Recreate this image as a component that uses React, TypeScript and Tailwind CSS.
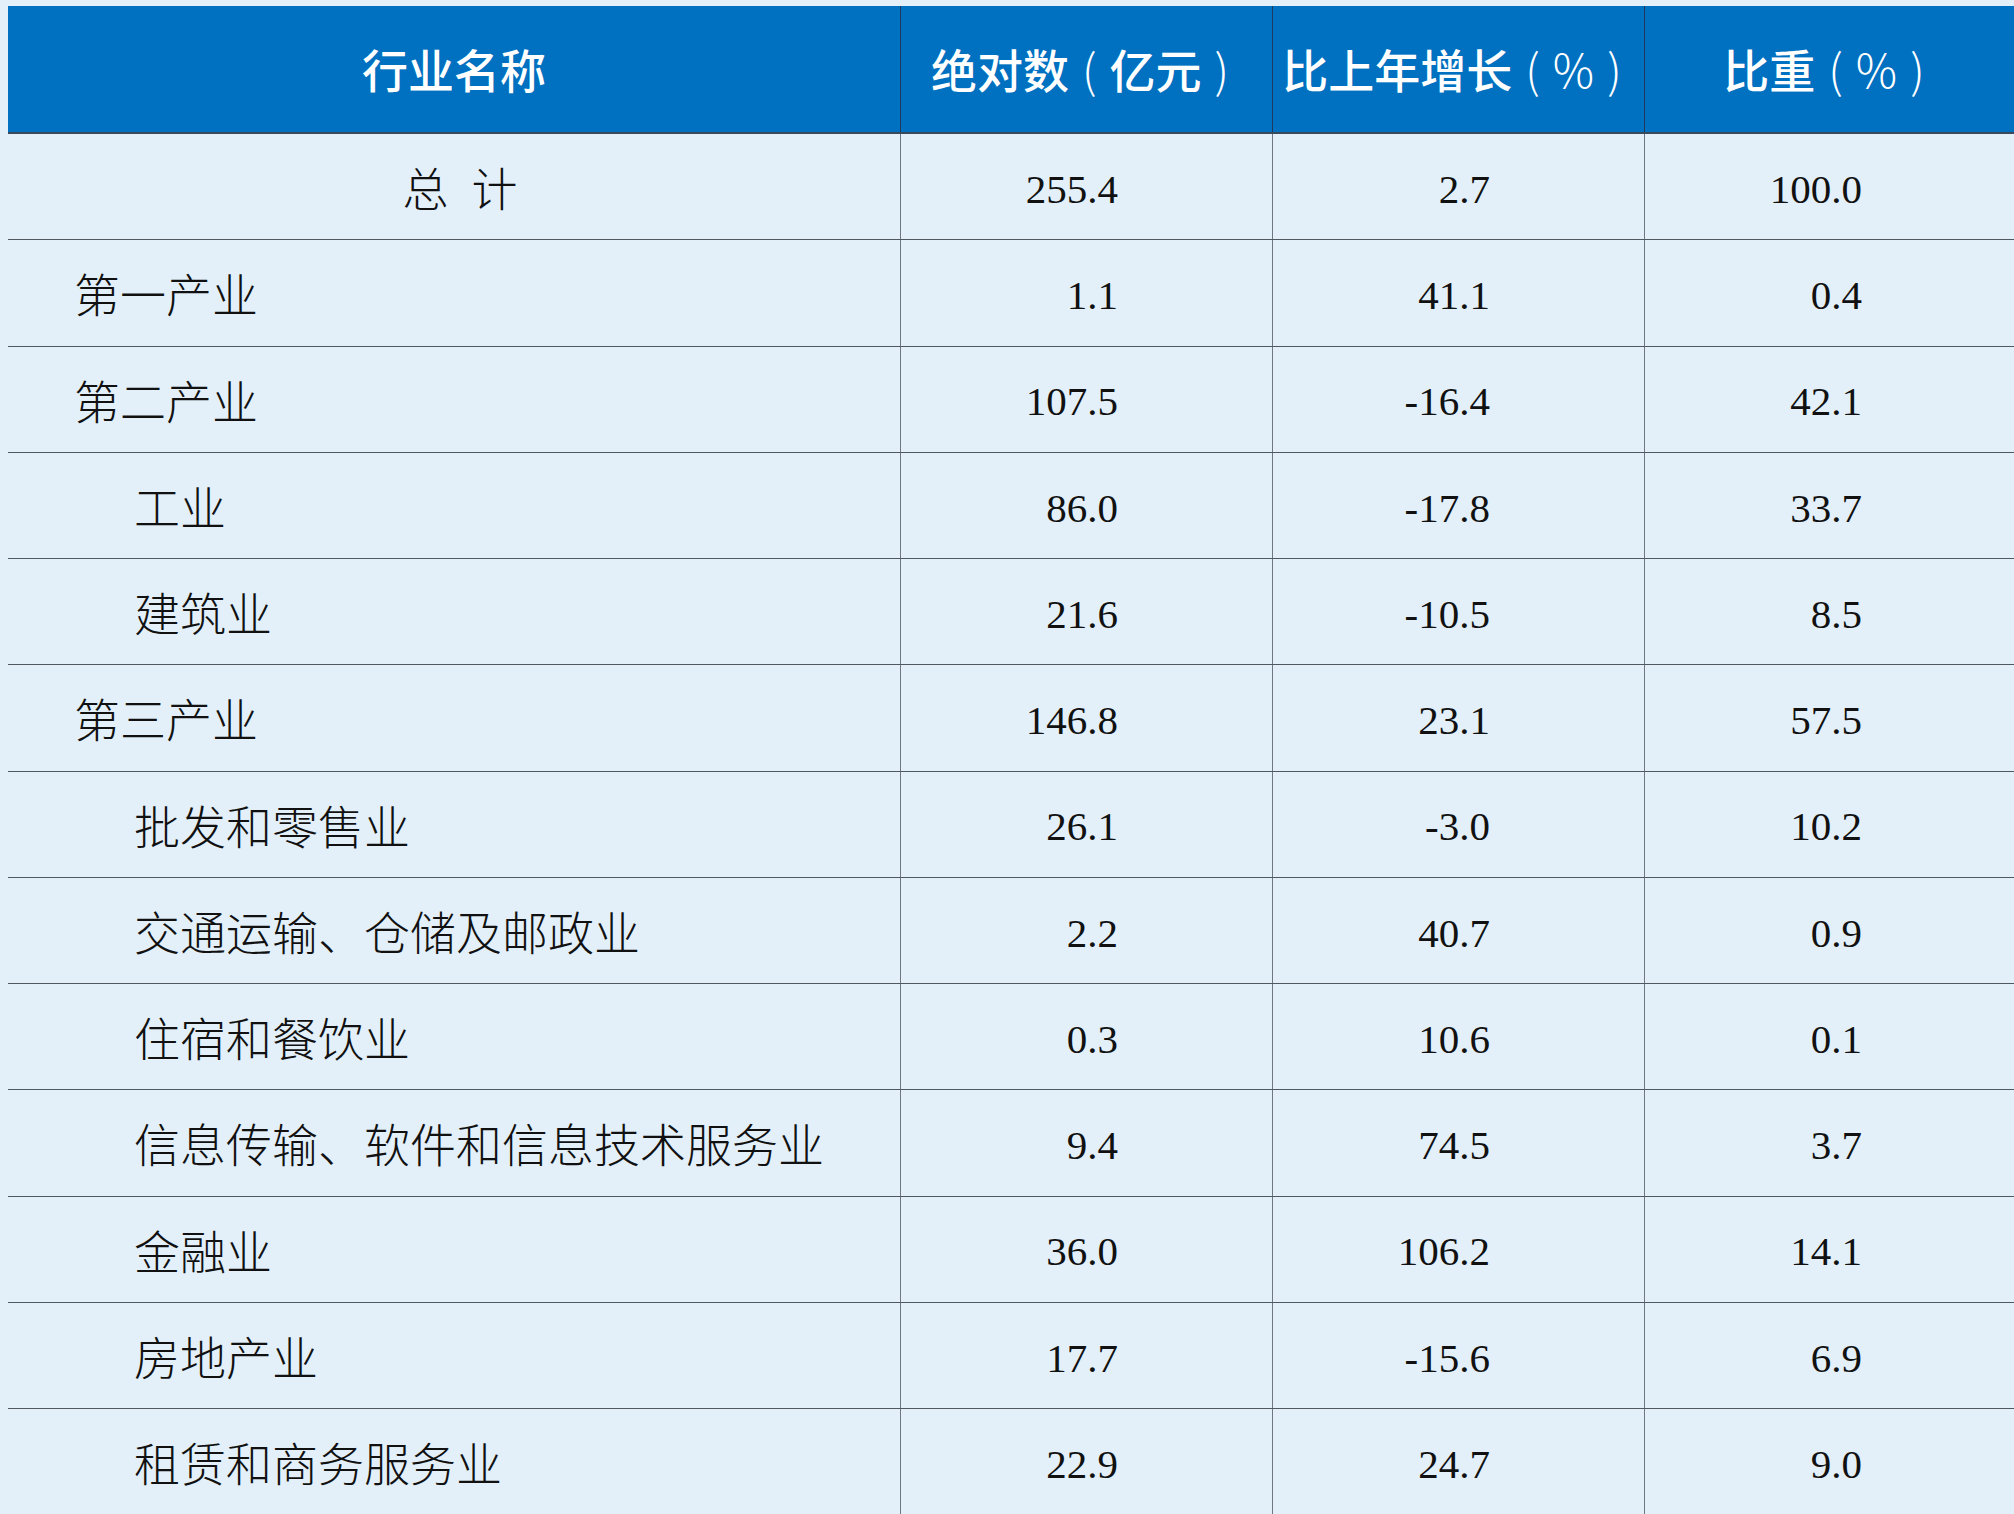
import React from "react";

// 行业数据：indent 0 = 顶层，1 = 缩进子项，-1 = 居中（总计）
interface Row {
	name: string;
	indent: -1 | 0 | 1;
	amount: string;
	growth: string;
	share: string;
}

const rows: Row[] = [
	{ name: "总\u2002计", indent: -1, amount: "255.4", growth: "2.7", share: "100.0" },
	{ name: "第一产业", indent: 0, amount: "1.1", growth: "41.1", share: "0.4" },
	{ name: "第二产业", indent: 0, amount: "107.5", growth: "-16.4", share: "42.1" },
	{ name: "工业", indent: 1, amount: "86.0", growth: "-17.8", share: "33.7" },
	{ name: "建筑业", indent: 1, amount: "21.6", growth: "-10.5", share: "8.5" },
	{ name: "第三产业", indent: 0, amount: "146.8", growth: "23.1", share: "57.5" },
	{ name: "批发和零售业", indent: 1, amount: "26.1", growth: "-3.0", share: "10.2" },
	{ name: "交通运输、仓储及邮政业", indent: 1, amount: "2.2", growth: "40.7", share: "0.9" },
	{ name: "住宿和餐饮业", indent: 1, amount: "0.3", growth: "10.6", share: "0.1" },
	{ name: "信息传输、软件和信息技术服务业", indent: 1, amount: "9.4", growth: "74.5", share: "3.7" },
	{ name: "金融业", indent: 1, amount: "36.0", growth: "106.2", share: "14.1" },
	{ name: "房地产业", indent: 1, amount: "17.7", growth: "-15.6", share: "6.9" },
	{ name: "租赁和商务服务业", indent: 1, amount: "22.9", growth: "24.7", share: "9.0" },
];

// 表头：括号单独包一层，留出两侧空隙
const Paren: React.FC<{ children: React.ReactNode }> = ({ children }) => (
	<>
		<span className="mx-[13px] font-light">(</span>
		<span>{children}</span>
		<span className="mx-[13px] font-light">)</span>
	</>
);

const headers: React.ReactNode[] = [
	"行业名称",
	<>
		绝对数
		<Paren>亿元</Paren>
	</>,
	<>
		比上年增长
		<Paren>
			<span className="font-light">%</span>
		</Paren>
	</>,
	<>
		比重
		<Paren>
			<span className="font-light">%</span>
		</Paren>
	</>,
];

const App: React.FC = () => {
	return (
		<div className="h-[1514px] w-[2014px] overflow-hidden bg-[#e3f0fa] pl-[8px] pt-[6px]">
			<div className="w-[2008px]">
				{/* 表头 */}
				<div className="grid h-[128px] grid-cols-[892px_372px_372px_372px] border-b-[2px] border-[#3a4a5c] bg-[#0070c0] font-['Noto_Sans_CJK_SC',sans-serif] text-[46px] font-medium text-white">
					{headers.map((h, i) => (
						<div
							key={i}
							className={
								i === 0
									? "flex items-center justify-center whitespace-nowrap pb-[2px]"
									: "flex items-center justify-center whitespace-nowrap border-l-[1.5px] border-[#1d3a5e] pb-[2px]"
							}
						>
							{h}
						</div>
					))}
				</div>

				{/* 数据行 */}
				{rows.map((r) => (
					<div
						key={r.name}
						className="grid h-[106.25px] grid-cols-[892px_372px_372px_372px] border-b-[1.5px] border-[#50585f] font-['Liberation_Serif','Noto_Sans_CJK_SC',serif] text-[#111111]"
					>
						<div
							className={
								r.indent === -1
									? "flex items-center justify-center pl-[12px] pt-[8px] text-[46px] font-light"
									: r.indent === 0
										? "flex items-center pl-[66px] pt-[8px] text-[46px] font-light"
										: "flex items-center pl-[126px] pt-[8px] text-[46px] font-light"
							}
						>
							{r.name}
						</div>
						<div className="flex items-center justify-end border-l-[1.5px] border-[#6f7780] pr-[154px] pt-[6px] text-[41px]">
							{r.amount}
						</div>
						<div className="flex items-center justify-end border-l-[1.5px] border-[#6f7780] pr-[154px] pt-[6px] text-[41px]">
							{r.growth}
						</div>
						<div className="flex items-center justify-end border-l-[1.5px] border-[#6f7780] pr-[154px] pt-[6px] text-[41px]">
							{r.share}
						</div>
					</div>
				))}
			</div>
		</div>
	);
};

export default App;
